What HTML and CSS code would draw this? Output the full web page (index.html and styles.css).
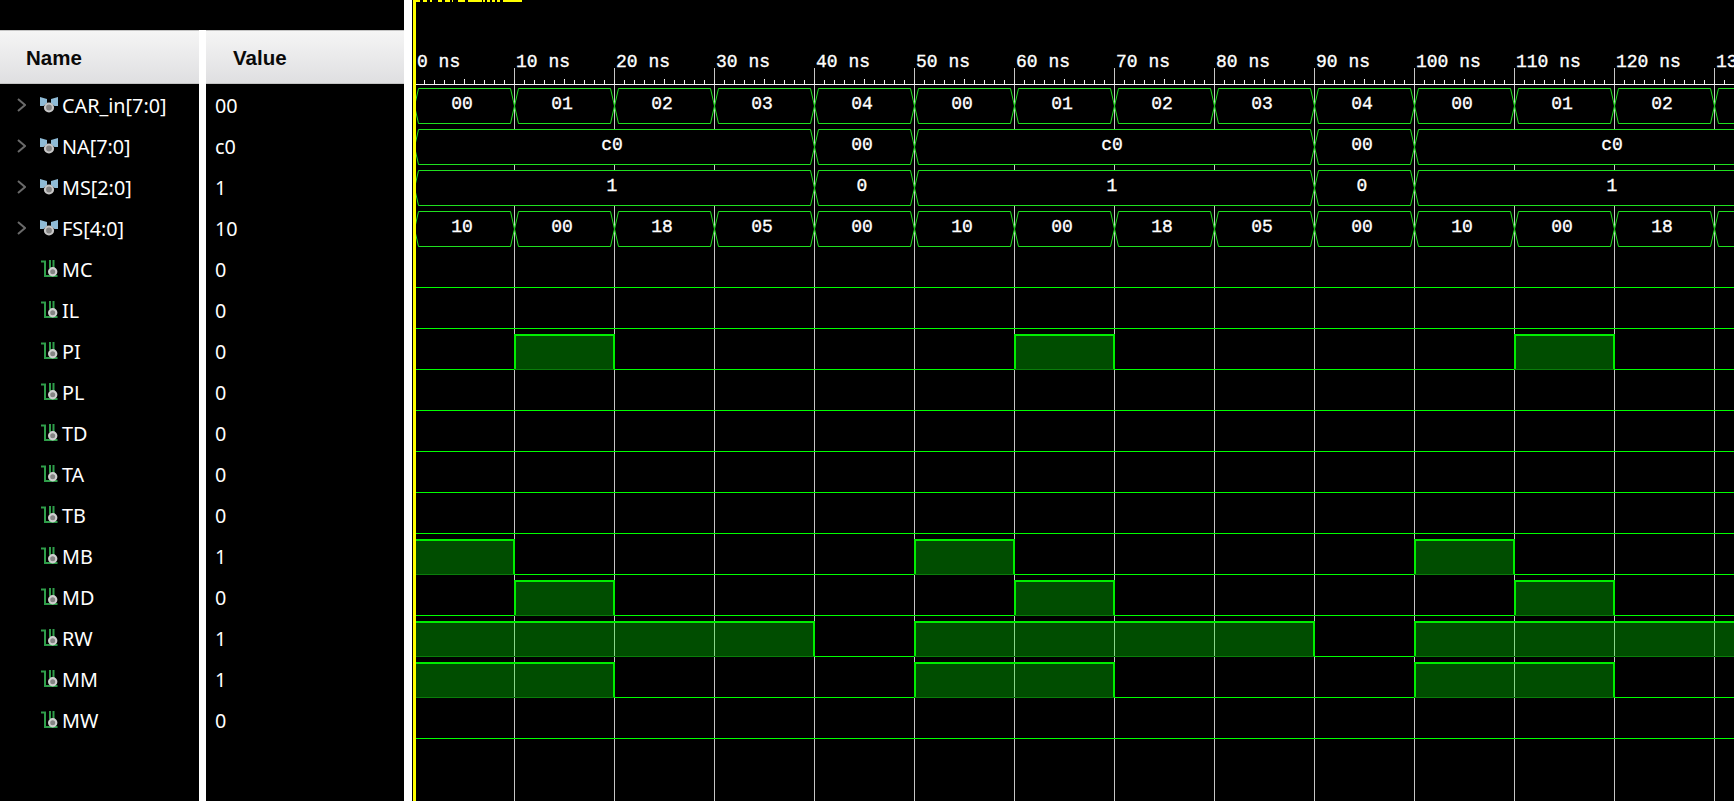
FILE: index.html
```html
<!DOCTYPE html>
<html lang="en">
<head>
<meta charset="utf-8">
<title>Waveform</title>
<link rel="stylesheet" href="styles.css">
</head>
<body>
<svg class="sprite" aria-hidden="true">
  <defs>
    <symbol id="chev" viewBox="0 0 9 14"><path d="M1 1L8 7L1 13" fill="none" stroke="#6a6a6a" stroke-width="2"/></symbol>
    <symbol id="bus" viewBox="0 0 18 18">
      <path d="M0 1L7 3V7L3.500 10H0Z M18 1L11 3V7L14.500 10H18Z" fill="#8fbbd6"/>
      <circle cx="9" cy="11.500" r="4" fill="#858585" stroke="#c8c8c8" stroke-width="2.200"/>
    </symbol>
    <symbol id="bit" viewBox="0 0 18 18">
      <path d="M1 1.500H5V16H17.500" fill="none" stroke="#2f9e4a" stroke-width="2"/>
      <path d="M10 0V8 M13.500 0V8" fill="none" stroke="#2f9e4a" stroke-width="2"/>
      <circle cx="12.700" cy="11.800" r="3.600" fill="#858585" stroke="#cfcfcf" stroke-width="2.200"/>
    </symbol>
  </defs>
</svg>
<main class="app">
  <section class="sidebar">
    <div class="sidebar-top"></div>
    <div class="table">
      <div class="row head"><div class="cell name-h"><span>Name</span></div><div class="cell value-h"><span>Value</span></div></div>
      <div class="row"><div class="cell name"><svg class="chev"><use href="#chev"/></svg><svg class="ico"><use href="#bus"/></svg><span>CAR_in[7:0]</span></div><div class="cell value"><span>00</span></div></div>
      <div class="row"><div class="cell name"><svg class="chev"><use href="#chev"/></svg><svg class="ico"><use href="#bus"/></svg><span>NA[7:0]</span></div><div class="cell value"><span>c0</span></div></div>
      <div class="row"><div class="cell name"><svg class="chev"><use href="#chev"/></svg><svg class="ico"><use href="#bus"/></svg><span>MS[2:0]</span></div><div class="cell value"><span>1</span></div></div>
      <div class="row"><div class="cell name"><svg class="chev"><use href="#chev"/></svg><svg class="ico"><use href="#bus"/></svg><span>FS[4:0]</span></div><div class="cell value"><span>10</span></div></div>
      <div class="row"><div class="cell name leaf"><svg class="ico"><use href="#bit"/></svg><span>MC</span></div><div class="cell value"><span>0</span></div></div>
      <div class="row"><div class="cell name leaf"><svg class="ico"><use href="#bit"/></svg><span>IL</span></div><div class="cell value"><span>0</span></div></div>
      <div class="row"><div class="cell name leaf"><svg class="ico"><use href="#bit"/></svg><span>PI</span></div><div class="cell value"><span>0</span></div></div>
      <div class="row"><div class="cell name leaf"><svg class="ico"><use href="#bit"/></svg><span>PL</span></div><div class="cell value"><span>0</span></div></div>
      <div class="row"><div class="cell name leaf"><svg class="ico"><use href="#bit"/></svg><span>TD</span></div><div class="cell value"><span>0</span></div></div>
      <div class="row"><div class="cell name leaf"><svg class="ico"><use href="#bit"/></svg><span>TA</span></div><div class="cell value"><span>0</span></div></div>
      <div class="row"><div class="cell name leaf"><svg class="ico"><use href="#bit"/></svg><span>TB</span></div><div class="cell value"><span>0</span></div></div>
      <div class="row"><div class="cell name leaf"><svg class="ico"><use href="#bit"/></svg><span>MB</span></div><div class="cell value"><span>1</span></div></div>
      <div class="row"><div class="cell name leaf"><svg class="ico"><use href="#bit"/></svg><span>MD</span></div><div class="cell value"><span>0</span></div></div>
      <div class="row"><div class="cell name leaf"><svg class="ico"><use href="#bit"/></svg><span>RW</span></div><div class="cell value"><span>1</span></div></div>
      <div class="row"><div class="cell name leaf"><svg class="ico"><use href="#bit"/></svg><span>MM</span></div><div class="cell value"><span>1</span></div></div>
      <div class="row"><div class="cell name leaf"><svg class="ico"><use href="#bit"/></svg><span>MW</span></div><div class="cell value"><span>0</span></div></div>
      <div class="row filler"><div class="cell"></div><div class="cell"></div></div>
    </div>
  </section>
  <svg class="wave" viewBox="412 0 1322 801" width="1322" height="801">
    <defs>
      <path id="s100" class="bus" d="M4 .5H96L100 18L96 35.500H4L0 18Z"/>
      <path id="s400" class="bus" d="M4 .5H396L400 18L396 35.500H4L0 18Z"/>
      <g id="h100"><rect class="hi" x="1" y="1" width="99" height="34"/><path class="edge" d="M1 35V1H100V35"/><path class="under" d="M0 35.500H100"/></g>
      <g id="h200"><rect class="hi" x="1" y="1" width="199" height="34"/><path class="edge" d="M1 35V1H200V35"/><path class="under" d="M0 35.500H200"/></g>
      <g id="h400"><rect class="hi" x="1" y="1" width="399" height="34"/><path class="edge" d="M1 35V1H400V35"/><path class="under" d="M0 35.500H400"/></g>
    </defs>

    <path class="grid" d="M514.500 68V801M614.500 68V801M714.500 68V801M814.500 68V801M914.500 68V801M1014.500 68V801M1114.500 68V801M1214.500 68V801M1314.500 68V801M1414.500 68V801M1514.500 68V801M1614.500 68V801M1714.500 68V801"/>
    <path class="axis" d="M416 84.500H1734"/>
    <path class="tick-minor" d="M424 82H1734"/>
    <path class="tick-major" d="M464 81.500H1734"/>

    <g class="label">
      <text x="417" y="67">0 ns</text><text x="516" y="67">10 ns</text><text x="616" y="67">20 ns</text><text x="716" y="67">30 ns</text><text x="816" y="67">40 ns</text><text x="916" y="67">50 ns</text><text x="1016" y="67">60 ns</text><text x="1116" y="67">70 ns</text><text x="1216" y="67">80 ns</text><text x="1316" y="67">90 ns</text><text x="1416" y="67">100 ns</text><text x="1516" y="67">110 ns</text><text x="1616" y="67">120 ns</text><text x="1716" y="67">130 ns</text>
    </g>

    <use href="#s100" x="414.500" y="88"/><use href="#s100" x="514.500" y="88"/><use href="#s100" x="614.500" y="88"/><use href="#s100" x="714.500" y="88"/><use href="#s100" x="814.500" y="88"/><use href="#s100" x="914.500" y="88"/><use href="#s100" x="1014.500" y="88"/><use href="#s100" x="1114.500" y="88"/><use href="#s100" x="1214.500" y="88"/><use href="#s100" x="1314.500" y="88"/><use href="#s100" x="1414.500" y="88"/><use href="#s100" x="1514.500" y="88"/><use href="#s100" x="1614.500" y="88"/><use href="#s100" x="1714.500" y="88"/>
    <use href="#s400" x="414.500" y="129"/><use href="#s100" x="814.500" y="129"/><use href="#s400" x="914.500" y="129"/><use href="#s100" x="1314.500" y="129"/><use href="#s400" x="1414.500" y="129"/>
    <use href="#s400" x="414.500" y="170"/><use href="#s100" x="814.500" y="170"/><use href="#s400" x="914.500" y="170"/><use href="#s100" x="1314.500" y="170"/><use href="#s400" x="1414.500" y="170"/>
    <use href="#s100" x="414.500" y="211"/><use href="#s100" x="514.500" y="211"/><use href="#s100" x="614.500" y="211"/><use href="#s100" x="714.500" y="211"/><use href="#s100" x="814.500" y="211"/><use href="#s100" x="914.500" y="211"/><use href="#s100" x="1014.500" y="211"/><use href="#s100" x="1114.500" y="211"/><use href="#s100" x="1214.500" y="211"/><use href="#s100" x="1314.500" y="211"/><use href="#s100" x="1414.500" y="211"/><use href="#s100" x="1514.500" y="211"/><use href="#s100" x="1614.500" y="211"/><use href="#s100" x="1714.500" y="211"/>

    <g class="label mid">
      <text x="462" y="109">00</text><text x="562" y="109">01</text><text x="662" y="109">02</text><text x="762" y="109">03</text><text x="862" y="109">04</text><text x="962" y="109">00</text><text x="1062" y="109">01</text><text x="1162" y="109">02</text><text x="1262" y="109">03</text><text x="1362" y="109">04</text><text x="1462" y="109">00</text><text x="1562" y="109">01</text><text x="1662" y="109">02</text>
      <text x="612" y="150">c0</text><text x="862" y="150">00</text><text x="1112" y="150">c0</text><text x="1362" y="150">00</text><text x="1612" y="150">c0</text>
      <text x="612" y="191">1</text><text x="862" y="191">0</text><text x="1112" y="191">1</text><text x="1362" y="191">0</text><text x="1612" y="191">1</text>
      <text x="462" y="232">10</text><text x="562" y="232">00</text><text x="662" y="232">18</text><text x="762" y="232">05</text><text x="862" y="232">00</text><text x="962" y="232">10</text><text x="1062" y="232">00</text><text x="1162" y="232">18</text><text x="1262" y="232">05</text><text x="1362" y="232">00</text><text x="1462" y="232">10</text><text x="1562" y="232">00</text><text x="1662" y="232">18</text>
    </g>

    <path class="low" d="M416 287.500H1734 M416 328.500H1734 M416 369.500H514M614 369.500H1014M1114 369.500H1514M1614 369.500H1734 M416 410.500H1734 M416 451.500H1734 M416 492.500H1734 M416 533.500H1734 M514 574.500H914M1014 574.500H1414M1514 574.500H1734 M416 615.500H514M614 615.500H1014M1114 615.500H1514M1614 615.500H1734 M814 656.500H914M1314 656.500H1414 M614 697.500H914M1114 697.500H1414M1614 697.500H1734 M416 738.500H1734"/>

    <use href="#h100" x="514" y="334"/><use href="#h100" x="1014" y="334"/><use href="#h100" x="1514" y="334"/>
    <use href="#h100" x="414" y="539"/><use href="#h100" x="914" y="539"/><use href="#h100" x="1414" y="539"/>
    <use href="#h100" x="514" y="580"/><use href="#h100" x="1014" y="580"/><use href="#h100" x="1514" y="580"/>
    <use href="#h400" x="414" y="621"/><use href="#h400" x="914" y="621"/><use href="#h400" x="1414" y="621"/>
    <use href="#h200" x="414" y="662"/><use href="#h200" x="914" y="662"/><use href="#h200" x="1414" y="662"/>

    <rect class="cursor" x="413" y="0" width="3" height="801"/>
    <path class="cursor-tag" d="M416 1H420M423 1H427M430 1H432M438 1H442M445 1H450M452 1H453M458 1H465M468 1H482M483 1H485M487 1H490M492 1H495M497 1H500M503 1H522"/>
  </svg>
</main>
</body>
</html>
```

FILE: styles.css
```css
* { box-sizing: border-box; }

html, body {
  margin: 0;
  height: 100%;
  background: #000;
  overflow: hidden;
}

.sprite {
  position: absolute;
  width: 0;
  height: 0;
}

.app {
  display: flex;
  width: 1734px;
  height: 801px;
  background: #000;
}

.sidebar {
  display: flex;
  flex-direction: column;
  flex: 0 0 412px;
  height: 801px;
  border-right: 8px solid #fff;
}

.sidebar-top {
  flex: 0 0 30px;
  background: #000;
}

.table {
  display: flex;
  flex-direction: column;
  flex: 1;
  background: #fff;
}

.row {
  display: grid;
  grid-template-columns: 199px 198px;
  column-gap: 7px;
  flex: 0 0 41px;
}

.row.head { flex-basis: 54px; }
.row.filler { flex: 1; }

.cell {
  display: flex;
  align-items: center;
  background: #000;
  color: #fff;
  font-family: "Noto Sans", "Open Sans", sans-serif;
  font-size: 19.8px;
  white-space: nowrap;
}

.cell span { padding-top: 1px; }
.head .cell span { padding-top: 2px; }

.head .cell {
  background: linear-gradient(#f5f5f5, #dfdfe1);
  border-top: 1px solid #c4c4c4;
  border-bottom: 1px solid #c4c4c4;
  color: #0a0a0a;
  font-family: "Liberation Sans", Arial, sans-serif;
  font-size: 20.5px;
  font-weight: 700;
}

.name-h { padding-left: 26px; }
.value-h { padding-left: 27px; }

.name { padding-left: 17px; }
.name.leaf { padding-left: 40px; }
.value { padding-left: 9px; }

.chev {
  flex: none;
  width: 9px;
  height: 14px;
  margin-right: 14px;
}

.ico {
  flex: none;
  width: 18px;
  height: 18px;
  margin-right: 4px;
}

.wave {
  flex: none;
  display: block;
  background: #000;
}

.grid { fill: none; stroke: #c6c6c6; stroke-width: 1; }
.axis { fill: none; stroke: #f0f0f0; stroke-width: 1; }
.tick-minor { fill: none; stroke: #f0f0f0; stroke-width: 4; stroke-dasharray: 1 9; }
.tick-major { fill: none; stroke: #f0f0f0; stroke-width: 5; stroke-dasharray: 1 99; }

.label text {
  fill: #fff;
  stroke: #fff;
  stroke-width: 0.35px;
  font-family: "Liberation Mono", "Courier New", monospace;
  font-size: 18px;
}

.label.mid text { text-anchor: middle; }

.bus { fill: #000; stroke: #1fe01f; stroke-width: 1; }
.low { fill: none; stroke: #00ff00; stroke-width: 1; }
.hi { fill: rgba(0, 255, 0, 0.3); stroke: none; }
.edge { fill: none; stroke: #00ee00; stroke-width: 2; }
.under { fill: none; stroke: #0a7d0a; stroke-width: 1; }

.cursor { fill: #ffff00; }
.cursor-tag { fill: none; stroke: #ffff00; stroke-width: 2; }
```
